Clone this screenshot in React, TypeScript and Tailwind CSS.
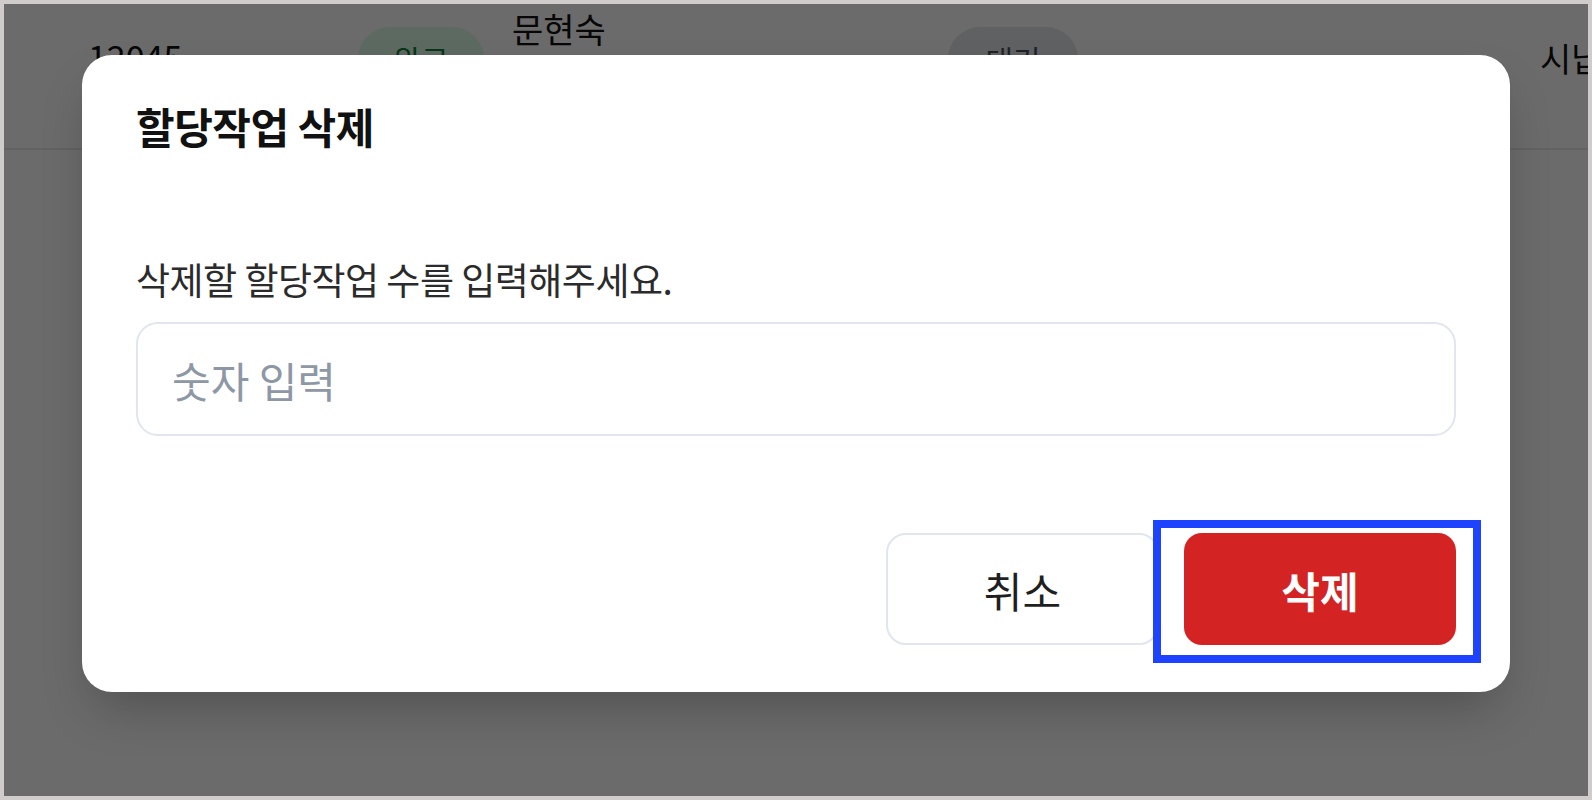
import React from "react";

const kr = "font-['Noto_Sans_CJK_KR','Noto_Sans',sans-serif]";

function BackgroundRow() {
  return (
    <div className="flex items-start h-[146px] border-b-2 border-[#e9e9e9] text-[#111] text-[34px] leading-[41px]">
      <div className="ml-[84px] mt-[31px] w-[270px] shrink-0">12045</div>
      <div className="mt-[23px] flex h-[64px] w-[126px] shrink-0 items-center justify-center rounded-full bg-[#dcfce7] text-[#15803d] text-[30px]">
        완료
      </div>
      <div className="ml-[28px] mt-[3px] w-[436px] shrink-0 leading-[44px]">
        <div>문현숙</div>
        <div className="text-[#666] text-[28px]">010-2345-6789</div>
      </div>
      <div className="mt-[23px] flex h-[64px] w-[130px] shrink-0 items-center justify-center rounded-full bg-[#e5e7eb] text-[#4b5563] text-[30px]">
        대기
      </div>
      <div className="ml-[462px] mt-[33px] shrink-0 whitespace-nowrap">시납품</div>
    </div>
  );
}

function DeleteModal() {
  return (
    <div className="w-[1428px] rounded-[30px] bg-white shadow-2xl px-[54px] pt-[44px] pb-[47px]">
      <h2 className="text-[42px] leading-[54px] font-bold text-[#111] tracking-[-0.5px]">
        할당작업 삭제
      </h2>
      <p className="mt-[102px] text-[37px] leading-[48px] text-[#2b2b2b] tracking-[-0.5px]">
        삭제할 할당작업 수를 입력해주세요.
      </p>
      <input
        type="text"
        placeholder="숫자 입력"
        className="mt-[19px] block h-[114px] w-full rounded-[22px] border-2 border-[#e1e6ee] px-[34px] text-[42px] text-[#111] placeholder:text-[#8e97a6] outline-none"
      />
      <div className="mt-[97px] flex justify-end gap-[25px]">
        <button className="h-[112px] w-[273px] rounded-[20px] border-2 border-[#e1e6ee] bg-white text-[42px] text-[#1f1f1f]">
          취소
        </button>
        <div className="relative">
          <button className="h-[112px] w-[272px] rounded-[18px] bg-[#d32323] text-[42px] font-bold text-white">
            삭제
          </button>
          <div className="pointer-events-none absolute -left-[31px] -right-[25px] -top-[13px] -bottom-[18px] border-[8px] border-[#1d43ff]" />
        </div>
      </div>
    </div>
  );
}

export default function App() {
  return (
    <div className={`w-[1592px] h-[800px] bg-[#d0cccc] p-[4px] ${kr}`}>
      <div className="relative h-full w-full overflow-hidden bg-white">
        <BackgroundRow />
        <div className="absolute inset-0 flex items-start justify-center bg-black/[0.58] pt-[51px]">
          <DeleteModal />
        </div>
      </div>
    </div>
  );
}
